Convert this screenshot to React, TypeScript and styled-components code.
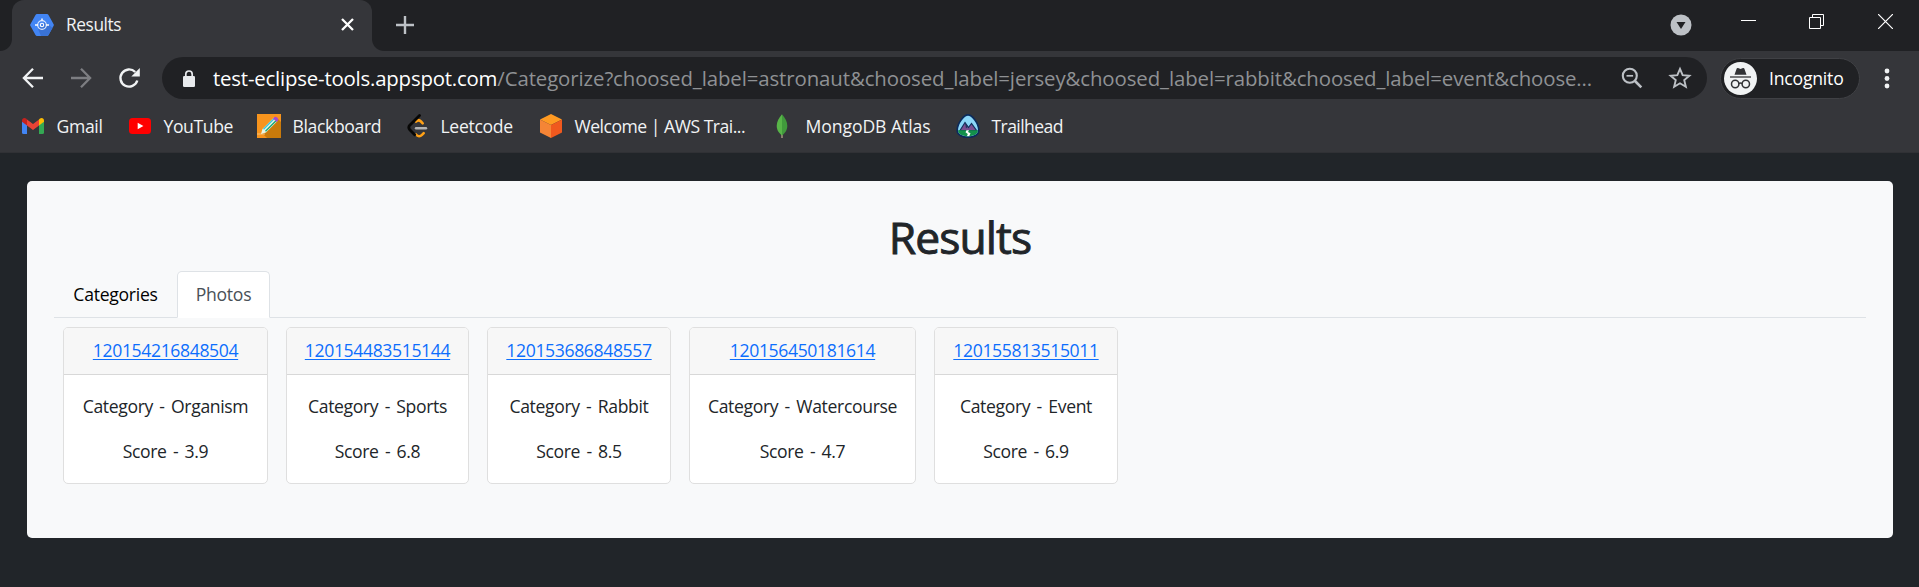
import React from "react";
import styled, { createGlobalStyle } from "styled-components";

const GlobalStyle = createGlobalStyle`
  *, *::before, *::after { box-sizing: border-box; }
  html, body { margin: 0; background: #212529; }
  body { font-family: "Open Sans", "Noto Sans", sans-serif; font-size: 17.6px; overflow: hidden; }
  svg { display: block; flex: none; }
`;

const Window = styled.div`
  display: flex;
  flex-direction: column;
  width: 1919px;
  height: 587px;
  background: #212529;
`;

const TabStrip = styled.div`
  display: flex;
  height: 51px;
  padding-left: 12px;
  background: #202124;
`;

const BrowserTab = styled.div`
  position: relative;
  display: flex;
  align-items: center;
  width: 360px;
  height: 51px;
  padding: 0 18px 2px;
  border-radius: 12px 12px 0 0;
  background: #35363a;
  color: #f1f3f4;

  &::before, &::after {
    content: "";
    position: absolute;
    bottom: 0;
    width: 12px;
    height: 12px;
  }
  &::before {
    left: -12px;
    background: radial-gradient(circle at 0 0, transparent 11.5px, #35363a 12.5px);
  }
  &::after {
    right: -12px;
    background: radial-gradient(circle at 100% 0, transparent 11.5px, #35363a 12.5px);
  }
`;

const TabTitle = styled.span`
  flex: 1;
  padding-left: 12px;
  font-size: 17.3px;
  line-height: 24px;
  letter-spacing: -0.4px;
`;

const NewTab = styled.div`
  display: flex;
  align-items: center;
  padding: 0 0 2px 24px;
`;

const WindowControls = styled.div`
  display: flex;
  align-items: flex-start;
  margin-left: auto;
  padding: 14px 26px 0 0;
`;

const ControlSlot = styled.div<{ $gap: number }>`
  margin-left: ${(p) => p.$gap}px;
`;

const Toolbar = styled.div`
  display: flex;
  align-items: center;
  height: 48px;
  padding: 6px 29px 0 21px;
  background: #35363a;
`;

const NavButtons = styled.div`
  display: flex;
  gap: 24px;
  width: 141px;
`;

const AddressBar = styled.div`
  display: flex;
  align-items: center;
  width: 1545px;
  height: 42px;
  padding: 0 15px 0 21px;
  border-radius: 21px;
  background: #202124;
`;

const Url = styled.div`
  flex: 1;
  padding-left: 18px;
  font-size: 20.4px;
  line-height: 30px;
  white-space: nowrap;
  color: #8f9194;
  letter-spacing: -0.1px;
`;

const Host = styled.span`
  color: #fff;
  letter-spacing: -0.2px;
`;

const BarIcons = styled.div`
  display: flex;
  align-items: center;
  gap: 25px;
`;

const IncognitoChip = styled.div`
  display: flex;
  align-items: center;
  width: 140px;
  height: 41px;
  margin-left: 13px;
  padding-left: 3px;
  border: 1px solid #404145;
  border-radius: 21px;
  background: #202124;
  color: #fff;
`;

const ChipLabel = styled.span`
  padding: 0 0 1px 12px;
  font-size: 17.6px;
  line-height: 24px;
  letter-spacing: -0.2px;
`;

const MenuSlot = styled.div`
  margin-left: auto;
`;

const BookmarkBar = styled.div`
  display: flex;
  align-items: center;
  height: 54px;
  padding: 0 0 0 21px;
  background: #35363a;
  border-bottom: 1px solid #303135;
`;

const Bookmark = styled.div<{ $width: number; $tracking: number }>`
  display: flex;
  align-items: center;
  gap: 11.5px;
  width: ${(p) => p.$width}px;
  color: #f1f3f4;
  font-size: 17.6px;
  line-height: 24px;
  letter-spacing: ${(p) => p.$tracking}px;
  white-space: nowrap;
`;

const Panel = styled.main`
  width: 1866px;
  height: 357px;
  margin: 28px 0 0 27px;
  padding: 27px;
  border-radius: 5px;
  background: #f8f9fa;
  color: #212529;
`;

const Heading = styled.h1`
  margin: 0 0 7px;
  padding-top: 2px;
  font-size: 44.4px;
  font-weight: 400;
  line-height: 54px;
  letter-spacing: -0.9px;
  text-align: center;
  -webkit-text-stroke: 0.9px #212529;
`;

const Tabs = styled.nav`
  display: flex;
  height: 47px;
  border-bottom: 1px solid #dee2e6;
`;

const Tab = styled.a<{ $active?: boolean; $width: number }>`
  width: ${(p) => p.$width}px;
  height: 47px;
  padding: 9px 0;
  border: 1px solid ${(p) => (p.$active ? "#dee2e6" : "transparent")};
  border-bottom-color: ${(p) => (p.$active ? "#fff" : "transparent")};
  border-radius: 5px 5px 0 0;
  background: ${(p) => (p.$active ? "#fff" : "transparent")};
  color: ${(p) => (p.$active ? "#495057" : "#000")};
  line-height: 27px;
  letter-spacing: -0.27px;
  text-align: center;
`;

const Cards = styled.section`
  display: flex;
  gap: 18px;
  padding: 9px;
`;

const Card = styled.article<{ $width: number }>`
  width: ${(p) => p.$width}px;
  height: 157px;
  border: 1px solid #dfdfdf;
  border-radius: 5px;
  background: #fff;
  text-align: center;
  line-height: 27px;
  white-space: nowrap;
  overflow: hidden;
`;

const CardHeader = styled.header`
  height: 47px;
  padding-top: 9px;
  border-bottom: 1px solid #d8d8d8;
  background: #f7f7f7;
`;

const PhotoLink = styled.a`
  color: #0d6efd;
  letter-spacing: -0.37px;
  text-decoration: underline;
  text-decoration-thickness: 1px;
  text-underline-offset: 2px;
`;

const CardBody = styled.div`
  display: flex;
  flex-direction: column;
  gap: 18px;
  padding-top: 18px;
`;

const CardLine = styled.p`
  margin: 0;
  letter-spacing: -0.35px;
  word-spacing: 2.1px;
`;

const AppEngineIcon = () => (
  <svg width="24" height="22" viewBox="0 0 24 22">
    <path d="M7 0h10q1 0 1.500.9l5 9q.7 1.100 0 2.200l-5 9q-.5.900-1.500.900H7q-1 0-1.500-.9l-5-9q-.7-1.100 0-2.200l5-9Q6 0 7 0z" fill="#4285f4" />
    <path d="M15.500 8l7 6-4 7q-.5 1-1.500 1h-6l-3-7z" fill="#3972d5" />
    <circle cx="12" cy="11" r="4.300" fill="none" stroke="#dce8fc" strokeWidth="1.200" />
    <circle cx="12" cy="11" r="1.700" fill="none" stroke="#fff" strokeWidth="1.100" />
    <path d="M12 4.500v2M5 11h3M16 11h3" stroke="#fff" strokeWidth="1.500" />
  </svg>
);

const GmailIcon = () => (
  <svg width="24" height="24" viewBox="0 0 24 24">
    <path d="M1 7v11.500Q1 20 2.500 20H6V10z" fill="#4285f4" />
    <path d="M23 7v11.500Q23 20 21.500 20H18V10z" fill="#34a853" />
    <path d="M18 5.500v6l5-3.700V6.500c0-2.300-2.200-3.300-4-2z" fill="#fbbc04" />
    <path d="M6 11.500v-6L12 10l6-4.500v6L12 16z" fill="#ea4335" />
    <path d="M1 6.500v1.300l5 3.700v-6l-1-1C3.200 3.200 1 4.200 1 6.500z" fill="#c5221f" />
  </svg>
);

const YouTubeIcon = () => (
  <svg width="24" height="24" viewBox="0 0 24 24">
    <rect x="1" y="4" width="22" height="16" rx="3.500" fill="#f00" />
    <path d="M9.700 8.700v6.600l5.700-3.300z" fill="#fff" />
  </svg>
);

const PencilIcon = () => (
  <svg width="24" height="24" viewBox="0 0 24 24">
    <rect width="24" height="24" fill="#f7941d" />
    <path d="M21 5l3 3v16H10l-5-5z" fill="#c97a0b" />
    <path d="M0 20h8" stroke="#f9c27b" strokeWidth="1" />
    <path d="M4 20l1.500-5L17 3.500l3.500 3.500L9 18.500z" fill="#e9f6e5" />
    <path d="M6.500 15.300L17 4.800" stroke="#3ac4dc" strokeWidth="1.500" />
    <path d="M8.500 17.300L19 6.800" stroke="#18a878" strokeWidth="1.500" />
    <path d="M16 4.500L17.500 3q1.200-.8 2.300.2l1 1q1 1.100.2 2.300L19.500 8z" fill="#a64ac9" />
  </svg>
);

const LeetCodeIcon = () => (
  <svg width="24" height="24" viewBox="0 0 24 24" fill="none" strokeLinecap="round">
    <path d="M11 7.500q2.500-2.500 5 0l1.700 1.800M11 20.500q3 3.300 6 .4l1.700-1.700" stroke="#ffa116" strokeWidth="2.600" />
    <path d="M14.500 1.500L4.800 11.200q-2 2.300 0 4.600l4.900 5" stroke="#070706" strokeWidth="2.800" />
    <path d="M11 14.200h10" stroke="#b3b3b3" strokeWidth="2.400" />
  </svg>
);

const CubeIcon = () => (
  <svg width="24" height="24" viewBox="0 0 24 24">
    <path d="M12 0l11 5.500L12 11 1 5.500z" fill="#ff9a22" />
    <path d="M1 5.500L12 11v13L1 18.500z" fill="#f58536" />
    <path d="M23 5.500L12 11v13l11-5.500z" fill="#f0591e" />
  </svg>
);

const LeafIcon = () => (
  <svg width="24" height="24" viewBox="0 0 24 24">
    <path d="M12 20v4" stroke="#b8a48c" strokeWidth="1.300" />
    <path d="M12 .3C9 4 6.700 7.500 6.700 12c0 4.500 2.800 7.500 5.300 9.500z" fill="#58b548" />
    <path d="M12 .3c3 3.700 5.300 7.200 5.300 11.700 0 4.500-2.800 7.500-5.300 9.500z" fill="#419a3c" />
  </svg>
);

const TrailheadIcon = () => (
  <svg width="24" height="24" viewBox="0 0 24 24">
    <path d="M12 .9C8.500.9 1.200 8.500 1.200 16.500c0 4.300 5 6.700 10.800 6.700s10.800-2.400 10.800-6.700C22.800 8.500 15.500.9 12 .9z" fill="#8bd6f8" stroke="#0b2b5c" strokeWidth="1.600" />
    <path d="M4 16.500l5-8 3.500 5 3-4 5 7z" fill="#7b4e91" stroke="#12335f" strokeWidth="1.200" />
    <path d="M9 8.500l3 4-2 2z" fill="#21345f" />
    <path d="M2 16.300h20c0 3.700-4.500 6-10 6s-10-2.300-10-6z" fill="#13914a" />
    <path d="M10.500 16.300h2.500l-1 1.700 2.500 1.300-1.200 2.700h-2.300l.8-2.100-2.300-1.700z" fill="#fff" />
  </svg>
);

const BackIcon = () => (
  <svg width="24" height="24" viewBox="0 0 24 24" fill="none" stroke="#f1f3f4" strokeWidth="2.300">
    <path d="M22 12H3.500M12 2.800L2.900 12l9.100 9.200" />
  </svg>
);

const ForwardIcon = () => (
  <svg width="24" height="24" viewBox="0 0 24 24" fill="none" stroke="#7d7e82" strokeWidth="2.300">
    <path d="M2 12h18.500M12 2.800l9.100 9.200-9.100 9.200" />
  </svg>
);

const ReloadIcon = () => (
  <svg width="24" height="24" viewBox="0 0 24 24">
    <path d="M20.300 14.500A8.600 8.600 0 1 1 18.200 6" fill="none" stroke="#f1f3f4" strokeWidth="2.400" />
    <path d="M22.800 2v8.500h-8.500z" fill="#f1f3f4" />
  </svg>
);

const LockIcon = () => (
  <svg width="12" height="17" viewBox="0 0 12 17">
    <rect y="6" width="12" height="11" rx="1.300" fill="#e8eaed" />
    <path d="M2.800 7V4.200a3.200 3.200 0 0 1 6.400 0V7" fill="none" stroke="#e8eaed" strokeWidth="1.700" />
  </svg>
);

const ZoomOutIcon = () => (
  <svg width="22" height="22" viewBox="0 0 22 22" fill="none" stroke="#bdc1c6">
    <circle cx="8.800" cy="8.800" r="7" strokeWidth="2.100" />
    <path d="M14 14l6.300 6.300" strokeWidth="2.600" />
    <path d="M5.500 8.800h6.600" strokeWidth="1.700" />
  </svg>
);

const StarIcon = () => (
  <svg width="24" height="24" viewBox="0 0 24 24">
    <path d="M12 2.900l2.650 6.250 6.750.55-5.150 4.450 1.600 6.600L12 17.250l-5.850 3.500 1.600-6.600L2.600 9.700l6.750-.55z" fill="none" stroke="#bdc1c6" strokeWidth="1.900" />
  </svg>
);

const IncognitoIcon = () => (
  <svg width="33" height="33" viewBox="0 0 33 33">
    <circle cx="16.500" cy="16.500" r="16.500" fill="#f1f3f4" />
    <path d="M10.500 12.800l2.200-6.200q.4-.8 1.300-.5l2.500.8 2.500-.8q.9-.3 1.300.5l2.200 6.200z" fill="#313235" />
    <path d="M6 15h21" stroke="#4d4e51" strokeWidth="1.500" />
    <g fill="none" stroke="#313235" strokeWidth="1.500">
      <circle cx="11.200" cy="22" r="3.700" />
      <circle cx="21.800" cy="22" r="3.700" />
      <path d="M14.900 21.700q1.600-1.300 3.200 0" />
    </g>
  </svg>
);

const bookmarks = [
  { label: "Gmail", icon: <GmailIcon />, width: 107, tracking: -0.35 },
  { label: "YouTube", icon: <YouTubeIcon />, width: 129, tracking: -0.4 },
  { label: "Blackboard", icon: <PencilIcon />, width: 148, tracking: -0.37 },
  { label: "Leetcode", icon: <LeetCodeIcon />, width: 134, tracking: -0.32 },
  { label: "Welcome | AWS Trai...", icon: <CubeIcon />, width: 231, tracking: -0.5 },
  { label: "MongoDB Atlas", icon: <LeafIcon />, width: 186, tracking: -0.08 },
  { label: "Trailhead", icon: <TrailheadIcon />, width: 120, tracking: -0.6 },
];

const photos = [
  { id: "120154216848504", category: "Organism", score: "3.9", width: 205 },
  { id: "120154483515144", category: "Sports", score: "6.8", width: 183 },
  { id: "120153686848557", category: "Rabbit", score: "8.5", width: 184 },
  { id: "120156450181614", category: "Watercourse", score: "4.7", width: 227 },
  { id: "120155813515011", category: "Event", score: "6.9", width: 184 },
];

export default function App() {
  return (
    <Window>
      <GlobalStyle />
      <TabStrip>
        <BrowserTab>
          <AppEngineIcon />
          <TabTitle>Results</TabTitle>
          <svg width="13" height="13" viewBox="0 0 13 13" stroke="#fff" strokeWidth="2.300">
            <path d="M1 1l11 11M12 1L1 12" />
          </svg>
        </BrowserTab>
        <NewTab>
          <svg width="18" height="18" viewBox="0 0 18 18" stroke="#bdc1c6" strokeWidth="2.400">
            <path d="M9 0v18M0 9h18" />
          </svg>
        </NewTab>
        <WindowControls>
          <ControlSlot $gap={0}>
            <svg width="22" height="22" viewBox="0 0 22 22">
              <circle cx="11" cy="11" r="10.500" fill="#bdc1c6" />
              <path d="M6.500 8h9L11 15z" fill="#202124" />
            </svg>
          </ControlSlot>
          <ControlSlot $gap={49}>
            <svg width="15" height="15" viewBox="0 0 15 15"><path d="M0 6.500h15" stroke="#fff" /></svg>
          </ControlSlot>
          <ControlSlot $gap={53}>
            <svg width="15" height="15" viewBox="0 0 15 15" fill="none" stroke="#fff">
              <path d="M.5 3.500h11v11H.5zM3.500 3.500v-3h11v11h-3" />
            </svg>
          </ControlSlot>
          <ControlSlot $gap={54}>
            <svg width="15" height="15" viewBox="0 0 15 15" stroke="#fff" strokeWidth="1.200">
              <path d="M0 0l15 15M15 0L0 15" />
            </svg>
          </ControlSlot>
        </WindowControls>
      </TabStrip>
      <Toolbar>
        <NavButtons>
          <BackIcon />
          <ForwardIcon />
          <ReloadIcon />
        </NavButtons>
        <AddressBar>
          <LockIcon />
          <Url>
            <Host>test-eclipse-tools.appspot.com</Host>
            /Categorize?choosed_label=astronaut&amp;choosed_label=jersey&amp;choosed_label=rabbit&amp;choosed_label=event&amp;choose...
          </Url>
          <BarIcons>
            <ZoomOutIcon />
            <StarIcon />
          </BarIcons>
        </AddressBar>
        <IncognitoChip>
          <IncognitoIcon />
          <ChipLabel>Incognito</ChipLabel>
        </IncognitoChip>
        <MenuSlot>
          <svg width="6" height="21" viewBox="0 0 6 21" fill="#f1f3f4">
            <circle cx="3" cy="3" r="2.400" />
            <circle cx="3" cy="10.500" r="2.400" />
            <circle cx="3" cy="18" r="2.400" />
          </svg>
        </MenuSlot>
      </Toolbar>
      <BookmarkBar>
        {bookmarks.map((b) => (
          <Bookmark key={b.label} $width={b.width} $tracking={b.tracking}>
            {b.icon}
            <span>{b.label}</span>
          </Bookmark>
        ))}
      </BookmarkBar>
      <Panel>
        <Heading>Results</Heading>
        <Tabs>
          <Tab $width={123}>Categories</Tab>
          <Tab $width={93} $active>Photos</Tab>
        </Tabs>
        <Cards>
          {photos.map((p) => (
            <Card key={p.id} $width={p.width}>
              <CardHeader>
                <PhotoLink>{p.id}</PhotoLink>
              </CardHeader>
              <CardBody>
                <CardLine>Category - {p.category}</CardLine>
                <CardLine>Score - {p.score}</CardLine>
              </CardBody>
            </Card>
          ))}
        </Cards>
      </Panel>
    </Window>
  );
}
